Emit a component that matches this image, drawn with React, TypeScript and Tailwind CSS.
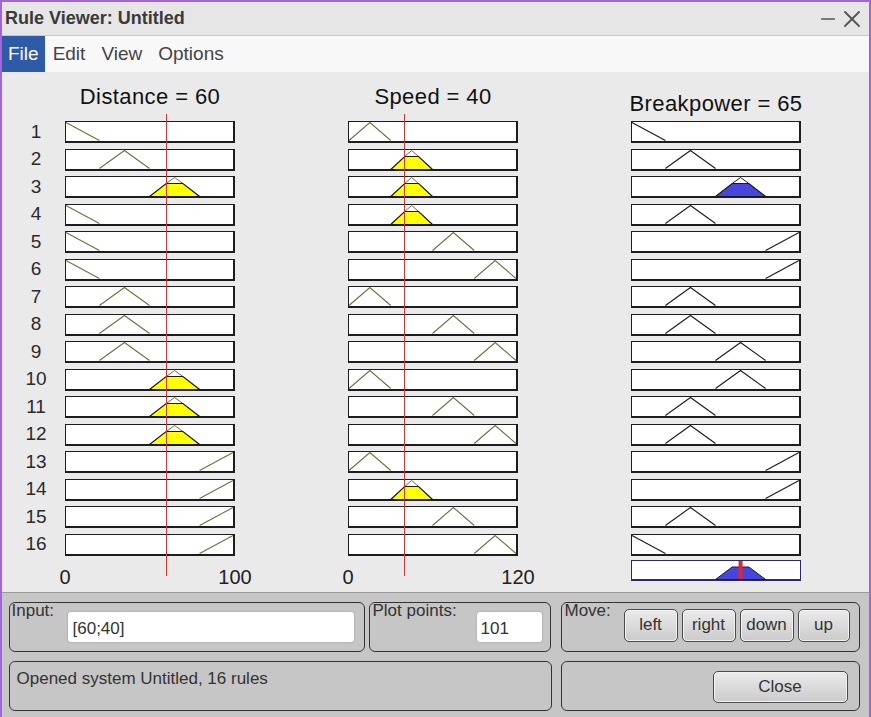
import { Minus, X } from 'lucide-react';
import type { ReactNode } from 'react';

type MF =
  | { kind: 'tri'; a: number; b: number; c: number }
  | { kind: 'down'; a: number; b: number }
  | { kind: 'up'; a: number; b: number };

// inner size of one rule box
const W = 167;
const H = 19;
const CLIP = 2 / 3;
const yT = 0.5;
const yB = H - 0.5;

const tri = (a: number, b: number, c: number): MF => ({ kind: 'tri', a, b, c });
const down = (a: number, b: number): MF => ({ kind: 'down', a, b });
const up = (a: number, b: number): MF => ({ kind: 'up', a, b });

// distance 0..100
const dNear = down(0, 0.2);
const dMid = tri(0.2, 0.35, 0.5);
const dFar = tri(0.5, 0.65, 0.8);
const dVery = up(0.8, 1);

// speed 0..120
const s1 = tri(0, 0.125, 0.25);
const s2 = tri(0.25, 0.375, 0.5);
const s3 = tri(0.5, 0.625, 0.75);
const s4 = tri(0.75, 0.875, 1);

// breakpower 0..100
const pLow = down(0, 0.2);
const pMid = tri(0.2, 0.35, 0.5);
const pHigh = tri(0.5, 0.65, 0.8);
const pMax = up(0.8, 1);

const distance = [dNear, dMid, dFar, dNear, dNear, dNear, dMid, dMid, dMid, dFar, dFar, dFar, dVery, dVery, dVery, dVery];
const speed = [s1, s2, s2, s2, s3, s4, s1, s3, s4, s1, s3, s4, s1, s2, s3, s4];
const power = [pLow, pMid, pHigh, pMid, pMax, pMax, pMid, pMid, pHigh, pHigh, pMid, pMid, pMax, pMax, pMid, pLow];

const distActive = [2, 9, 10, 11];
const speedActive = [1, 2, 3, 13];
const powerActive = [2];

function Shape({ mf, active, line, fill }: { mf: MF; active: boolean; line: string; fill: string }) {
  if (mf.kind === 'down') {
    return <polyline points={`${mf.a * W},${yT} ${mf.b * W},${yB}`} fill="none" stroke={line} strokeWidth={1.1} />;
  }
  if (mf.kind === 'up') {
    return <polyline points={`${mf.a * W},${yB} ${mf.b * W},${yT}`} fill="none" stroke={line} strokeWidth={1.1} />;
  }
  const { a, b, c } = mf;
  if (!active) {
    return (
      <polyline points={`${a * W},${yB} ${b * W},${yT} ${c * W},${yB}`} fill="none" stroke={line} strokeWidth={1.1} />
    );
  }
  const yc = yB - CLIP * (yB - yT);
  const xl = (a + CLIP * (b - a)) * W;
  const xr = (c - CLIP * (c - b)) * W;
  return (
    <>
      <polyline points={`${xl},${yc} ${b * W},${yT} ${xr},${yc}`} fill="none" stroke={line} strokeWidth={1} />
      <polygon points={`${a * W},${yB + 1} ${xl},${yc} ${xr},${yc} ${c * W},${yB + 1}`} fill={fill} stroke="#1a1a1a" strokeWidth={1.2} />
    </>
  );
}

function RuleBox({ children }: { children: ReactNode }) {
  return (
    <div className="h-[22px] w-[170px] border-t border-l border-r-2 border-b-2 border-[#1d1d1d] bg-white">
      <svg width={W} height={H} className="block overflow-visible">
        {children}
      </svg>
    </div>
  );
}

function Column({
  title,
  titleClass,
  mfs,
  active,
  line,
  fill,
  className,
  children,
}: {
  title: string;
  titleClass: string;
  mfs: MF[];
  active: number[];
  line: string;
  fill: string;
  className: string;
  children?: ReactNode;
}) {
  return (
    <div className={`relative w-[170px] ${className}`}>
      <div className={`flex h-[49px] justify-center whitespace-nowrap text-[22px] leading-[24px] tracking-[0.4px] text-[#111] ${titleClass}`}>
        {title}
      </div>
      <div className="flex flex-col gap-[5.5px]">
        {mfs.map((mf, i) => (
          <RuleBox key={i}>
            <Shape mf={mf} active={active.includes(i)} line={line} fill={fill} />
          </RuleBox>
        ))}
      </div>
      {children}
    </div>
  );
}

function Axis({ max }: { max: string }) {
  return (
    <div className="mt-[11.5px] flex h-[20px] justify-between text-[20px] leading-[20px] text-[#222]">
      <span className="flex w-0 justify-center">0</span>
      <span className="flex w-0 justify-center">{max}</span>
    </div>
  );
}

function Panel({ className, children }: { className: string; children: ReactNode }) {
  return <div className={`flex h-[50px] items-start rounded-[6px] border-[1.5px] border-[#333] ${className}`}>{children}</div>;
}

function Btn({ label, className }: { label: string; className: string }) {
  return (
    <button
      className={`rounded-[5px] border border-[#4a4a4a] bg-linear-to-b from-[#ebebeb] to-[#cbcbcb] text-[17px] leading-[20px] text-[#333] shadow-[inset_0_0_0_1px_#f2f2f2] ${className}`}
    >
      {label}
    </button>
  );
}

export default function App() {
  return (
    <div className="flex h-[717px] w-[871px] flex-col overflow-hidden border-2 border-b-0 border-[#a066d8] font-['Liberation_Sans',Arial,sans-serif]">
      {/* title bar */}
      <div className="flex h-[34px] shrink-0 items-center justify-between border-b border-[#c9c9c9] bg-[#e6e6e6] pl-[3px] pr-[3px]">
        <span className="text-[18px] font-bold text-[#3a3a3a]">Rule Viewer: Untitled</span>
        <div className="flex items-center text-[#555]">
          <Minus size={22} strokeWidth={1.5} />
          <X size={28} strokeWidth={1.6} className="-ml-[1px]" />
        </div>
      </div>

      {/* menu */}
      <div className="flex h-[36px] shrink-0 items-stretch bg-[#f8f8f8] text-[19px] text-[#444]">
        <span className="flex items-center bg-[#2f5aa8] px-[6px] text-white">File</span>
        <span className="flex items-center px-[8px]">Edit</span>
        <span className="flex items-center px-[8px]">View</span>
        <span className="flex items-center px-[8px]">Options</span>
      </div>

      {/* rules */}
      <div className="flex h-[520px] shrink-0 bg-[#eaeaea]">
        <div className="ml-[18px] flex w-[32px] flex-col gap-[5.5px] pt-[49px]">
          {Array.from({ length: 16 }, (_, i) => (
            <div key={i} className="flex h-[22px] items-center justify-center text-[19px] text-[#2a2a2a]">
              {i + 1}
            </div>
          ))}
        </div>

        <Column
          title="Distance = 60"
          titleClass="pt-[13px]"
          mfs={distance}
          active={distActive}
          line="#6f6f42"
          fill="#ffff00"
          className="ml-[13px]"
        >
          <div className="absolute left-[100.5px] top-[42px] h-[462px] w-[1.5px] bg-[#c23a3a]" />
          <Axis max="100" />
        </Column>

        <Column
          title="Speed = 40"
          titleClass="pt-[13px]"
          mfs={speed}
          active={speedActive}
          line="#6f6f42"
          fill="#ffff00"
          className="ml-[113px]"
        >
          <div className="absolute left-[55.5px] top-[42px] h-[462px] w-[1.5px] bg-[#c23a3a]" />
          <Axis max="120" />
        </Column>

        <Column
          title="Breakpower = 65"
          titleClass="pt-[20px]"
          mfs={power}
          active={powerActive}
          line="#1a1a1a"
          fill="#4646dc"
          className="ml-[113px]"
        >
          <div className="mt-[4.5px] h-[21px] w-[170px] border-t border-l border-r border-b-2 border-[#2a2a66] bg-white">
            <svg width={168} height={18} className="block overflow-visible">
              <polygon
                points={`${0.5 * W},18.5 ${(0.5 + CLIP * 0.15) * W},6 ${(0.8 - CLIP * 0.15) * W},6 ${0.8 * W},18.5`}
                fill="#4646dc"
                stroke="#1a1a40"
                strokeWidth={1}
              />
              <rect x={0.65 * W - 2} y={0} width={4} height={18} fill="#e3262e" />
            </svg>
          </div>
        </Column>
      </div>

      {/* controls */}
      <div className="flex flex-1 flex-col gap-[9px] border-t border-[#9a9a9a] bg-[#c6c6c6] pl-[7px] pt-[9px] text-[17px] text-[#333]">
        <div className="flex">
          <Panel className="w-[356px]">
            <span className="ml-[1.5px] w-[56px] leading-[16px]">Input:</span>
            <div className="mt-[8.5px] flex h-[30px] w-[286px] items-center rounded-[3px] bg-white pl-[5px] pt-[5px] shadow-[0_0_2px_rgba(0,0,0,0.25)]">
              [60;40]
            </div>
          </Panel>
          <Panel className="ml-[4px] w-[182px]">
            <span className="ml-[2.5px] w-[104px] leading-[16px]">Plot points:</span>
            <div className="mt-[8.5px] flex h-[30px] w-[65px] items-center rounded-[3px] bg-white pl-[4px] pt-[5px] shadow-[0_0_2px_rgba(0,0,0,0.25)]">
              101
            </div>
          </Panel>
          <Panel className="ml-[10px] w-[299px]">
            <span className="ml-[2.5px] w-[59px] leading-[16px]">Move:</span>
            <div className="mt-[5.5px] flex gap-[4px]">
              <Btn label="left" className="h-[33px] w-[54px]" />
              <Btn label="right" className="h-[33px] w-[54px]" />
              <Btn label="down" className="h-[33px] w-[54px]" />
              <Btn label="up" className="h-[33px] w-[52px]" />
            </div>
          </Panel>
        </div>
        <div className="flex">
          <Panel className="w-[543px]">
            <span className="pl-[6.5px] pt-[7.5px] leading-[18px]">Opened system Untitled, 16 rules</span>
          </Panel>
          <Panel className="ml-[9px] w-[299px]">
            <Btn label="Close" className="ml-[150.5px] mt-[8.5px] h-[32px] w-[135px]" />
          </Panel>
        </div>
      </div>
    </div>
  );
}
